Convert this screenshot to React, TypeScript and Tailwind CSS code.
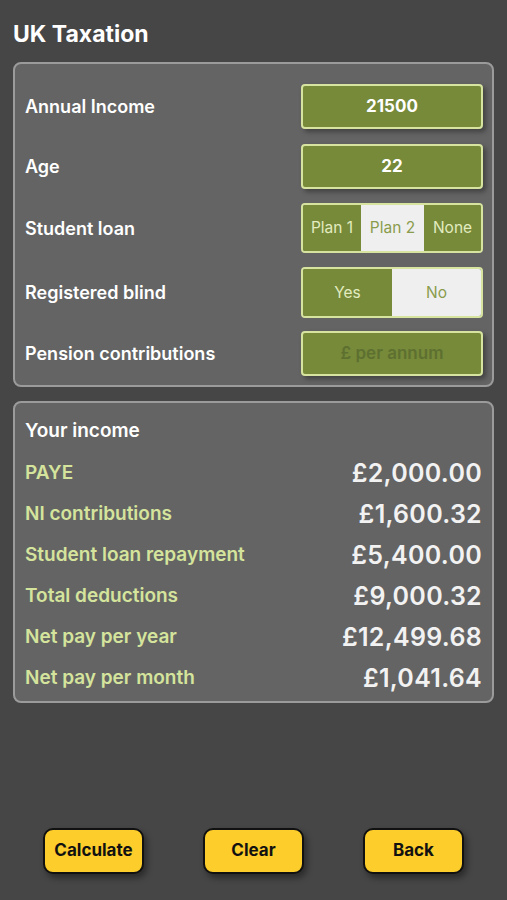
import { useState } from "react";

const font = { fontFamily: "Inter, 'Noto Sans', sans-serif" };

const results = [
    { label: "PAYE", value: "£2,000.00" },
    { label: "NI contributions", value: "£1,600.32" },
    { label: "Student loan repayment", value: "£5,400.00" },
    { label: "Total deductions", value: "£9,000.32" },
    { label: "Net pay per year", value: "£12,499.68" },
    { label: "Net pay per month", value: "£1,041.64" },
];

const FieldBox = ({ value, placeholder }: { value?: string; placeholder?: string }) => (
    <div className="w-[182px] h-[45px] rounded-[4px] border-2 border-[#d6e4a0] bg-[#768a3a] shadow-[3px_3px_5px_rgba(0,0,0,0.35)] flex items-center justify-center">
        {value ? (
            <span className="text-white text-[17px] font-bold">{value}</span>
        ) : (
            <span className="text-[#5e7030] text-[17px] font-semibold">{placeholder}</span>
        )}
    </div>
);

const Segmented = ({
    options,
    selected,
    widths,
    height,
}: {
    options: string[];
    selected: number;
    widths: string[];
    height: string;
}) => (
    <div className={`w-[182px] ${height} rounded-[4px] border-2 border-[#d6e4a0] overflow-hidden flex`}>
        {options.map((opt, i) => (
            <div
                key={opt}
                className={
                    "flex items-center justify-center text-[15.5px] " +
                    widths[i] +
                    (i === selected ? " bg-[#efefef] text-[#8a9c4c]" : " bg-[#768a3a] text-[#e3ecc0]")
                }
            >
                {opt}
            </div>
        ))}
    </div>
);

const Label = ({ children }: { children: React.ReactNode }) => (
    <span className="text-white text-[18px] font-semibold">{children}</span>
);

export default function App() {
    const [, setTick] = useState(0);

    return (
        <div style={font} className="h-[900px] bg-[#464646] px-[13px] flex flex-col">
            <h1 className="text-white text-[23px] font-bold mt-[20px] leading-[28px]">UK Taxation</h1>

            {/* inputs panel */}
            <div className="mt-[14px] h-[325px] rounded-[8px] border-2 border-[#9b9b9b] bg-[#646464] pl-[10px] pr-[9px] pt-[20px]">
                <div className="flex items-center justify-between h-[45px]">
                    <Label>Annual Income</Label>
                    <FieldBox value="21500" />
                </div>
                <div className="flex items-center justify-between h-[45px] mt-[15px]">
                    <Label>Age</Label>
                    <FieldBox value="22" />
                </div>
                <div className="flex items-center justify-between h-[50px] mt-[14px]">
                    <Label>Student loan</Label>
                    <Segmented
                        options={["Plan 1", "Plan 2", "None"]}
                        selected={1}
                        widths={["w-[58px]", "w-[63px]", "flex-1"]}
                        height="h-[50px]"
                    />
                </div>
                <div className="flex items-center justify-between h-[51px] mt-[14px]">
                    <Label>Registered blind</Label>
                    <Segmented options={["Yes", "No"]} selected={1} widths={["w-[89px]", "flex-1"]} height="h-[51px]" />
                </div>
                <div className="flex items-center justify-between h-[45px] mt-[13px]">
                    <Label>Pension contributions</Label>
                    <FieldBox placeholder="£ per annum" />
                </div>
            </div>

            {/* results panel */}
            <div className="mt-[14px] h-[302px] rounded-[8px] border-2 border-[#9b9b9b] bg-[#646464] pl-[10px] pr-[10px] pt-[15px]">
                <div className="h-[26px] flex items-center">
                    <span className="text-white text-[19px] font-semibold">Your income</span>
                </div>
                <div className="mt-[9px] flex flex-col">
                    {results.map((r) => (
                        <div key={r.label} className="h-[41px] flex items-center justify-between">
                            <span className="text-[#d5e49c] text-[19px] font-semibold">{r.label}</span>
                            <span className="text-[#f2f2f2] text-[25px] font-semibold tracking-[0.3px]">{r.value}</span>
                        </div>
                    ))}
                </div>
            </div>

            <div className="flex-1" />

            {/* actions */}
            <div className="flex justify-between px-[30px] mb-[26px]">
                {["Calculate", "Clear", "Back"].map((b) => (
                    <button
                        key={b}
                        onClick={() => setTick((t) => t + 1)}
                        className="w-[101px] h-[46px] rounded-[10px] border-2 border-[#111] bg-[#fdcd2b] text-[#111] text-[17px] font-bold shadow-[3px_4px_6px_rgba(0,0,0,0.4)]"
                    >
                        {b}
                    </button>
                ))}
            </div>
        </div>
    );
}
